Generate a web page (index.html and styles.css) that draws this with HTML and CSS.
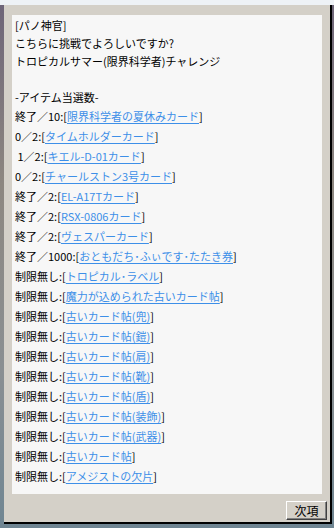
FILE: index.html
```html
<!DOCTYPE html>
<html lang="ja">

<head>
    <meta charset="UTF-8" />
    <title>次項</title>
    <link rel="stylesheet" href="styles.css">
</head>

<body>
    <div class="topbar"></div>

    <!-- NPC window -->
    <div class="window">
        <div class="content">
            <div class="line">[パノ神官]</div>
            <div class="line">こちらに挑戦でよろしいですか?</div>
            <div class="line">トロピカルサマー(限界科学者)チャレンジ</div>
            <div class="line"></div>
            <div class="line">-アイテム当選数-</div>

            <div class="row">終了／10:[<a href="#">限界科学者の夏休みカード</a>]</div>
            <div class="row">0／2:[<a href="#">タイムホルダーカード</a>]</div>
            <div class="row">&nbsp;1／2:[<a href="#">キエル-D-01カード</a>]</div>
            <div class="row">0／2:[<a href="#">チャールストン3号カード</a>]</div>
            <div class="row">終了／2:[<a href="#">EL-A17Tカード</a>]</div>
            <div class="row">終了／2:[<a href="#">RSX-0806カード</a>]</div>
            <div class="row">終了／2:[<a href="#">ヴェスパーカード</a>]</div>
            <div class="row">終了／1000:[<a href="#">おともだち･ふぃです･たたき券</a>]</div>
            <div class="row">制限無し:[<a href="#">トロピカル･ラベル</a>]</div>
            <div class="row">制限無し:[<a href="#">魔力が込められた古いカード帖</a>]</div>
            <div class="row">制限無し:[<a href="#">古いカード帖(兜)</a>]</div>
            <div class="row">制限無し:[<a href="#">古いカード帖(鎧)</a>]</div>
            <div class="row">制限無し:[<a href="#">古いカード帖(肩)</a>]</div>
            <div class="row">制限無し:[<a href="#">古いカード帖(靴)</a>]</div>
            <div class="row">制限無し:[<a href="#">古いカード帖(盾)</a>]</div>
            <div class="row">制限無し:[<a href="#">古いカード帖(装飾)</a>]</div>
            <div class="row">制限無し:[<a href="#">古いカード帖(武器)</a>]</div>
            <div class="row">制限無し:[<a href="#">古いカード帖</a>]</div>
            <div class="row">制限無し:[<a href="#">アメジストの欠片</a>]</div>
        </div>

        <div class="footer">
            <button class="next-btn">次項</button>
        </div>
    </div>
</body>

</html>
```

FILE: styles.css
```css
* {
    box-sizing: border-box;
}

body {
    margin: 0;
    padding: 0;
    height: 528px;
    overflow: hidden;
    background: linear-gradient(180deg, #6d6478 0%, #8d8780 35%, #8a8f92 70%, #6f8592 100%);
    font-family: "Noto Sans CJK JP", sans-serif;
    font-size: 11px;
    color: #000;
}

.topbar {
    height: 5px;
    background: #eef2f6;
}

.window {
    width: 328px;
    height: 519px;
    margin-left: 4px;
    background: #d4d0c8;
    border-right: 2px solid #000;
    border-bottom: 2px solid #000;
    display: flex;
    flex-direction: column;
}

.content {
    height: 479px;
    margin: 10px 8px 0 8px;
    padding: 1px 3px;
    background: #f7f7f7;
    white-space: nowrap;
}

.line {
    height: 18px;
    line-height: 18px;
}

.row {
    height: 20px;
    line-height: 20px;
}

.row a {
    color: #3d8fe8;
    text-decoration: underline;
    text-underline-offset: 2px;
}

.footer {
    display: flex;
    justify-content: flex-end;
    padding: 7px 3px 0 0;
}

.next-btn {
    width: 41px;
    height: 19px;
    padding: 0;
    background: #d4d0c8;
    border: none;
    border-top: 1px solid #fff;
    border-left: 1px solid #fff;
    border-right: 1px solid #404040;
    border-bottom: 1px solid #404040;
    box-shadow: inset -1px -1px 0 #808080;
    font-family: "Noto Sans CJK JP", sans-serif;
    font-size: 12px;
    line-height: 16px;
    color: #000;
}
```
